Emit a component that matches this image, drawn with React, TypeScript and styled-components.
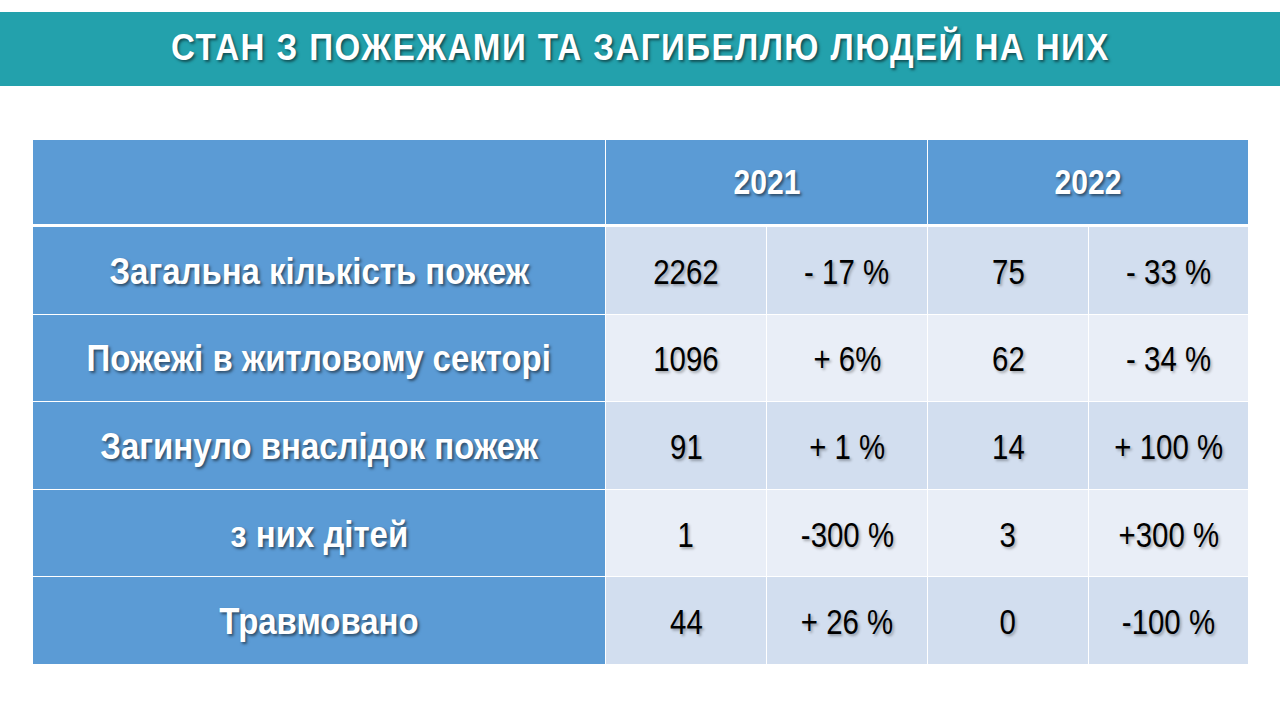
import { Fragment } from 'react';
import styled, { createGlobalStyle } from 'styled-components';

const Global = createGlobalStyle`
    body {
        margin: 0;
        background: #ffffff;
        font-family: "Liberation Sans", Arial, sans-serif;
    }
`;

const Page = styled.div`
    width: 1280px;
    height: 720px;
    padding-top: 12px;
    box-sizing: border-box;
    overflow: hidden;
`;

const Banner = styled.div`
    height: 74px;
    background: #23a1ac;
    display: flex;
    align-items: center;
    justify-content: center;
`;

// no narrow font installed, so squeeze the glyphs like Arial Narrow
const Narrow = styled.span<{ $sx: number }>`
    display: inline-block;
    white-space: nowrap;
    transform: scaleX(${(p) => p.$sx});
`;

const Title = styled.h1`
    margin: 0 0 2px;
    color: #ffffff;
    font-size: 37px;
    font-weight: 700;
    letter-spacing: 1.6px;
    text-shadow: 2px 2px 3px rgba(0, 0, 0, 0.5);
`;

const Grid = styled.div`
    margin: 54px 0 0 33px;
    width: 1215px;
    display: grid;
    grid-template-columns: 572px 160px 160px 160px 159px;
    grid-template-rows: 86px repeat(5, 86.6px);
    gap: 1px;
`;

const HeadCell = styled.div<{ $span?: number }>`
    grid-column: span ${(p) => p.$span || 1};
    margin-bottom: 2px;
    background: #5b9bd5;
    color: #ffffff;
    font-size: 35px;
    font-weight: 700;
    display: flex;
    align-items: center;
    justify-content: center;
    text-shadow: 2px 2px 3px rgba(0, 0, 0, 0.5);
`;

const LabelCell = styled.div`
    background: #5b9bd5;
    color: #ffffff;
    font-size: 36px;
    font-weight: 700;
    display: flex;
    align-items: center;
    justify-content: center;
    padding-top: 3px;
    text-shadow: 2px 2px 3px rgba(0, 0, 0, 0.5);
`;

const ValueCell = styled.div<{ $light: boolean }>`
    background: ${(p) => (p.$light ? '#e9eef7' : '#d2deef')};
    color: #000000;
    font-size: 35px;
    display: flex;
    align-items: center;
    justify-content: center;
    padding-top: 3px;
    text-shadow: 2px 2px 3px rgba(0, 0, 0, 0.3);
`;

const rows = [
    { label: 'Загальна кількість пожеж', v: ['2262', '- 17 %', '75', '- 33 %'] },
    { label: 'Пожежі в житловому секторі', v: ['1096', '+ 6%', '62', '- 34 %'] },
    { label: 'Загинуло внаслідок пожеж', v: ['91', '+ 1 %', '14', '+ 100 %'] },
    { label: 'з них дітей', v: ['1', '-300 %', '3', '+300 %'] },
    { label: 'Травмовано', v: ['44', '+ 26 %', '0', '-100 %'] },
];

const App = () => {
    return (
        <Page>
            <Global />
            <Banner>
                <Title>
                    <Narrow $sx={0.895}>СТАН З ПОЖЕЖАМИ ТА ЗАГИБЕЛЛЮ ЛЮДЕЙ НА НИХ</Narrow>
                </Title>
            </Banner>
            <Grid>
                <HeadCell />
                <HeadCell $span={2}><Narrow $sx={0.86}>2021</Narrow></HeadCell>
                <HeadCell $span={2}><Narrow $sx={0.86}>2022</Narrow></HeadCell>
                {rows.map((r, i) => (
                    <Fragment key={r.label}>
                        <LabelCell><Narrow $sx={0.915}>{r.label}</Narrow></LabelCell>
                        {r.v.map((v, j) => (
                            <ValueCell key={j} $light={i % 2 === 1}>
                                <Narrow $sx={0.84}>{v}</Narrow>
                            </ValueCell>
                        ))}
                    </Fragment>
                ))}
            </Grid>
        </Page>
    );
};

export default App;
